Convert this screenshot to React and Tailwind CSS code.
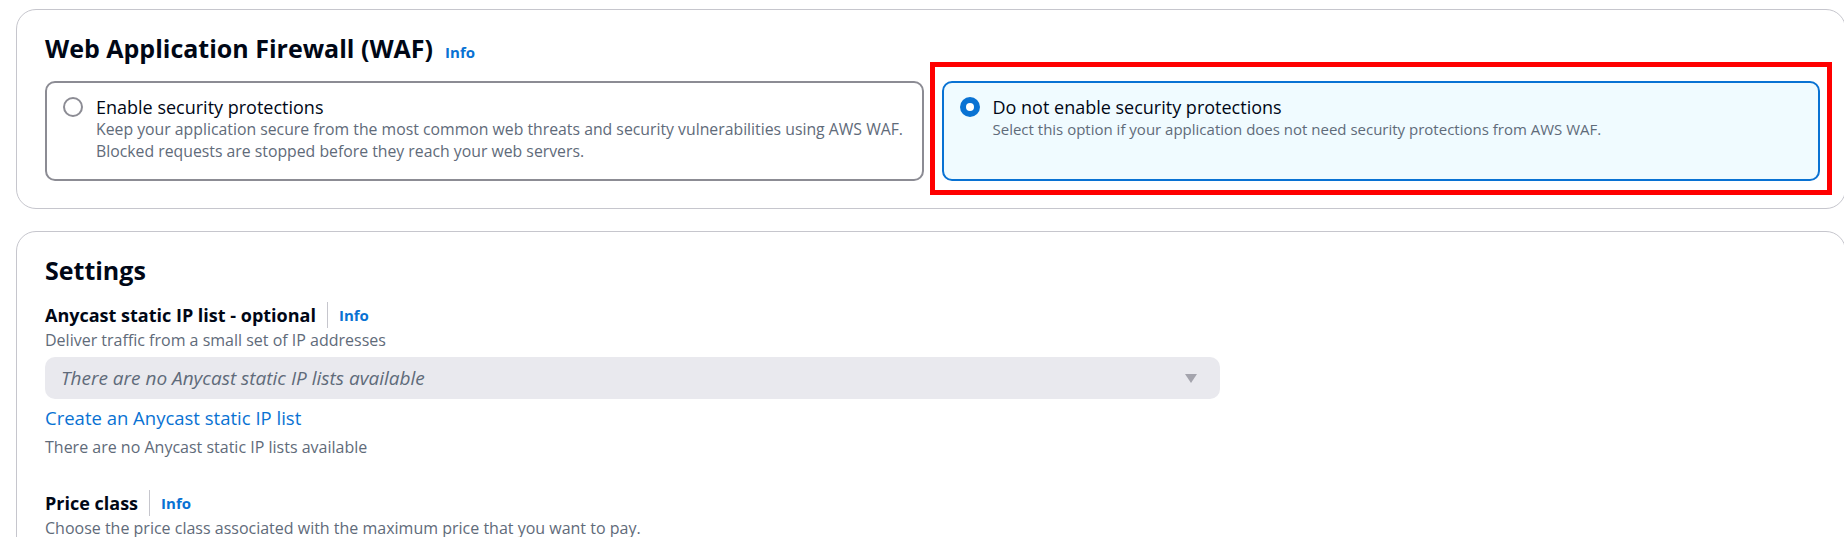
import React from "react";

const font = { fontFamily: "'Open Sans', 'Noto Sans', Arial, sans-serif" };

function InfoLink({ className = "" }) {
  return (
    <a className={"font-bold text-[#0972d3] text-[15px] leading-[20px] " + className}>Info</a>
  );
}

function RadioOff() {
  return <span className="mt-[1px] block h-[20px] w-[20px] shrink-0 rounded-full border-2 border-[#8c8c94] bg-white" />;
}

function RadioOn() {
  return (
    <span className="mt-[1px] flex h-[20px] w-[20px] shrink-0 items-center justify-center rounded-full bg-[#0972d3]">
      <span className="block h-[8px] w-[8px] rounded-full bg-white" />
    </span>
  );
}

function FieldLabel({ children }) {
  return (
    <div className="flex items-center">
      <span className="text-[18px] font-bold leading-[22px] text-[#000716]">{children}</span>
      <span className="mx-[11px] block h-[26px] w-px bg-[#c6c6cd]" />
      <InfoLink />
    </div>
  );
}

export default function App() {
  return (
    <div className="min-h-screen overflow-hidden bg-white pl-4 pt-[9px]" style={font}>
      <div className="flex w-[1830px] flex-col gap-[22px]">
        <section className="rounded-[20px] border border-[#c6c6cd] bg-white pb-[27px] pl-[28px] pr-[25px] pt-[23px]">
          <div className="flex items-baseline gap-[12px]">
            <h2 className="text-[25px] font-bold leading-[30px] text-[#000716]">Web Application Firewall (WAF)</h2>
            <InfoLink />
          </div>
          <div className="mt-[18px] grid grid-cols-2 gap-[18px]">
            <div className="flex gap-[13px] rounded-[10px] border-2 border-[#8c8c94] bg-white pb-[17px] pl-[16px] pr-[4px] pt-[13px]">
              <RadioOff />
              <div className="min-w-0">
                <div className="text-[18px] leading-[22px] text-[#000716]">Enable security protections</div>
                <div className="whitespace-nowrap text-[15.8px] leading-[22px] text-[#5f6b7a]">
                  Keep your application secure from the most common web threats and security vulnerabilities using AWS WAF.
                  <br />
                  Blocked requests are stopped before they reach your web servers.
                </div>
              </div>
            </div>
            <div className="relative flex gap-[13px] rounded-[10px] border-2 border-[#0972d3] bg-[#f0fbff] pb-[17px] pl-[16px] pr-4 pt-[13px]">
              <RadioOn />
              <div>
                <div className="text-[18px] leading-[22px] text-[#000716]">Do not enable security protections</div>
                <div className="text-[15px] leading-[22px] text-[#5f6b7a]">
                  Select this option if your application does not need security protections from AWS WAF.
                </div>
              </div>
              <div className="pointer-events-none absolute -bottom-[16px] -left-[14px] -right-[14px] -top-[21px] border-[5px] border-[#ff0000]" />
            </div>
          </div>
        </section>

        <section className="rounded-[20px] border border-[#c6c6cd] bg-white pb-[26px] pl-[28px] pr-[25px] pt-[23px]">
          <h2 className="text-[25px] font-bold leading-[30px] text-[#000716]">Settings</h2>
          <div className="mt-[17px]">
            <FieldLabel>Anycast static IP list - optional</FieldLabel>
            <div className="mt-[2px] text-[16px] leading-[20px] text-[#5f6b7a]">Deliver traffic from a small set of IP addresses</div>
            <div className="mt-[7px] flex h-[42px] w-[1175px] items-center justify-between rounded-[10px] bg-[#e9e9ee] pl-[16px] pr-[22px]">
              <span className="text-[19px] italic text-[#5f6b7a]">There are no Anycast static IP lists available</span>
              <svg width="14" height="11" viewBox="0 0 14 11" aria-hidden="true">
                <path d="M1 1 H13 L7 10 Z" fill="#a4a4ad" />
              </svg>
            </div>
            <a className="mt-[8px] block text-[18.5px] leading-[22px] text-[#0972d3]">Create an Anycast static IP list</a>
            <div className="mt-[8px] text-[16px] leading-[20px] text-[#5f6b7a]">There are no Anycast static IP lists available</div>
          </div>
          <div className="mt-[33px]">
            <FieldLabel>Price class</FieldLabel>
            <div className="mt-[2px] text-[16px] leading-[20px] text-[#5f6b7a]">Choose the price class associated with the maximum price that you want to pay.</div>
          </div>
        </section>
      </div>
    </div>
  );
}
